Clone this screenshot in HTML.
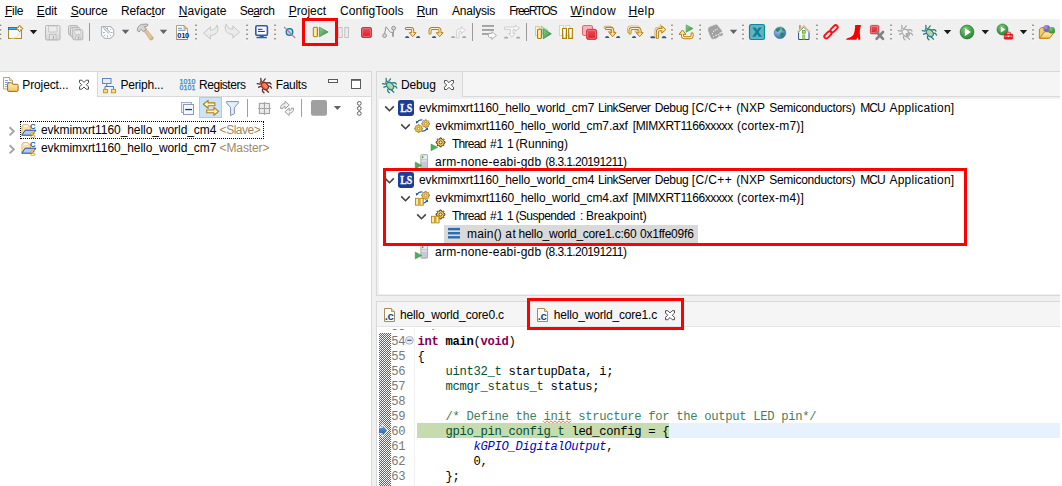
<!DOCTYPE html>
<html lang="en"><head><meta charset="utf-8"><title>MCUXpresso IDE</title>
<style>
html,body{margin:0;padding:0}
body{width:1062px;height:486px;overflow:hidden;background:#fff;position:relative;font:12px/16px "Liberation Sans",sans-serif;color:#000}
.a{position:absolute}
.t{position:absolute;white-space:pre;font:12px/16px "Liberation Sans",sans-serif}
.t u{text-decoration:underline;text-underline-offset:1px}
.c{position:absolute;white-space:pre;font:12.2px/15px "Liberation Mono",monospace;letter-spacing:-0.32px;left:417.5px}
.ln{position:absolute;white-space:pre;font:12.2px/15px "Liberation Mono",monospace;letter-spacing:-0.32px;left:391.3px;color:#787878}
.k{color:#7f0055;font-weight:bold}
.b{font-weight:bold}
.ty{color:#005032}
.cm{color:#3f7f5f}
.en{color:#0000c0;font-style:italic}
svg{position:absolute;overflow:visible}
.rb{border:3px solid #f00}
#ruler{background-image:conic-gradient(#1f70d8 25%,#fff 0 50%,#1f70d8 0 75%,#fff 0);background-size:2px 2px}
.sq{text-decoration:underline wavy #e66;text-decoration-thickness:1px;text-underline-offset:2px}
</style></head>
<body>
<div class="a" style="left:0;top:0;width:1060px;height:486px;background:#f0f0f0"></div>
<div class="a" style="left:0;top:0;width:1062px;height:19px;background:#fff"></div>

<!-- left view stack -->
<div class="a" style="left:0;top:71px;width:372px;height:1px;background:#d9d9d9"></div>
<div class="a" style="left:0;top:72px;width:371px;height:414px;background:#fff"></div>
<div class="a" style="left:98px;top:72px;width:273px;height:24px;background:#f3f3f3"></div>
<div class="a" style="left:97px;top:72px;width:1px;height:25px;background:#d9d9d9"></div>
<div class="a" style="left:97px;top:96px;width:274px;height:1px;background:#d9d9d9"></div>
<div class="a" style="left:371px;top:71px;width:1px;height:415px;background:#d9d9d9"></div>
<!-- link-with-editor toggled button -->
<div class="a" style="left:199px;top:97px;width:21px;height:19px;background:#cce4f7;border:1px solid #99d1ff"></div>
<!-- left toolbar separators -->
<div class="a" style="left:247px;top:99px;width:1px;height:18px;background:#a0a0a0"></div>
<div class="a" style="left:301px;top:99px;width:1px;height:18px;background:#a0a0a0"></div>
<!-- focus rectangle -->
<div class="a" style="left:20px;top:121px;width:242px;height:16px;border:1px dotted #000"></div>

<!-- debug view -->
<div class="a" style="left:376px;top:71px;width:684px;height:225px;background:#f0f0f0;border:1px solid #d9d9d9;border-right:0;box-sizing:border-box"></div>
<div class="a" style="left:463px;top:72px;width:597px;height:24px;background:#f5f5f5"></div>
<div class="a" style="left:462px;top:72px;width:1px;height:25px;background:#d9d9d9"></div>
<div class="a" style="left:462px;top:96px;width:598px;height:1px;background:#d9d9d9"></div>
<div class="a" style="left:379px;top:99px;width:681px;height:195px;background:#fff"></div>
<!-- selected stack frame -->
<div class="a" style="left:444px;top:225px;width:254px;height:18px;background:#d9d9d9"></div>

<!-- editor area -->
<div class="a" style="left:376px;top:301px;width:684px;height:185px;background:#f0f0f0;border:1px solid #d9d9d9;border-right:0;border-bottom:0;box-sizing:border-box"></div>
<div class="a" style="left:377px;top:302px;width:683px;height:24px;background:#f5f5f5"></div>
<div class="a" style="left:377px;top:326px;width:683px;height:1px;background:#e4e4e4"></div>
<div class="a" style="left:377px;top:327px;width:683px;height:159px;background:#fff"></div>
<div class="a" id="ruler" style="left:379px;top:333px;width:12px;height:153px"></div>
<div class="a" style="left:414px;top:328px;width:1px;height:158px;background:#f0f0f0"></div>
<!-- current line + instruction pointer highlight -->
<div class="a" style="left:417px;top:423px;width:643px;height:15px;background:#e8f2fe"></div>
<div class="a" style="left:417px;top:423px;width:252px;height:15px;background:#c6dbae"></div>

<svg width="1062" height="486" viewBox="0 0 1062 486" style="left:0;top:0">
<defs>
<linearGradient id="gY" x1="0" y1="0" x2="0" y2="1"><stop offset="0" stop-color="#fff6d0"/><stop offset="1" stop-color="#efc23e"/></linearGradient>
<linearGradient id="gYh" x1="0" y1="0" x2="1" y2="0"><stop offset="0" stop-color="#f3cf5c"/><stop offset=".5" stop-color="#fff3c4"/><stop offset="1" stop-color="#e9b93a"/></linearGradient>
<linearGradient id="gG" x1="0" y1="0" x2="1" y2="1"><stop offset="0" stop-color="#8fd08a"/><stop offset="1" stop-color="#2f8f3c"/></linearGradient>
<linearGradient id="gR" x1="0" y1="0" x2="0" y2="1"><stop offset="0" stop-color="#ee5058"/><stop offset="1" stop-color="#e01828"/></linearGradient>
<linearGradient id="gGr" x1="0" y1="0" x2="0" y2="1"><stop offset="0" stop-color="#f4f4f4"/><stop offset="1" stop-color="#d4d4d4"/></linearGradient>
<radialGradient id="gPlay" cx=".4" cy=".3" r=".8"><stop offset="0" stop-color="#7cc86c"/><stop offset="1" stop-color="#1e7e34"/></radialGradient>
<radialGradient id="gGlobe" cx=".35" cy=".3" r=".8"><stop offset="0" stop-color="#9cc8ee"/><stop offset="1" stop-color="#2c68ac"/></radialGradient>
<radialGradient id="gPur" cx=".35" cy=".3" r=".8"><stop offset="0" stop-color="#a99be0"/><stop offset="1" stop-color="#5a48a8"/></radialGradient>
<linearGradient id="gFold" x1="0" y1="0" x2="0" y2="1"><stop offset="0" stop-color="#fdeeb0"/><stop offset="1" stop-color="#f2c85c"/></linearGradient>
<linearGradient id="gWin" x1="0" y1="0" x2="1" y2="1"><stop offset="0" stop-color="#dff0fd"/><stop offset="1" stop-color="#ffffff"/></linearGradient>
<linearGradient id="gIP" x1="0" y1="0" x2="0" y2="1"><stop offset="0" stop-color="#6ca0d4"/><stop offset="1" stop-color="#245ca4"/></linearGradient>
</defs>
<rect x="-0.4" y="24.6" width="1.6" height="1.6" fill="#8c8372"/><rect x="-0.4" y="26.2" width="1.6" height="1" fill="#fbfbfb"/>
<rect x="-0.4" y="29.2" width="1.6" height="1.6" fill="#8c8372"/><rect x="-0.4" y="30.8" width="1.6" height="1" fill="#fbfbfb"/>
<rect x="-0.4" y="33.6" width="1.6" height="1.6" fill="#8c8372"/><rect x="-0.4" y="35.2" width="1.6" height="1" fill="#fbfbfb"/>
<rect x="-0.4" y="38.0" width="1.6" height="1.6" fill="#8c8372"/><rect x="-0.4" y="39.6" width="1.6" height="1" fill="#fbfbfb"/>
<g><rect x="8.500" y="27.500" width="13" height="11" fill="#f2f9fe" stroke="#94742c"/><path d="M8.500 30v8.500h13v-8.500" fill="none" stroke="#a88830" stroke-width="1"/><rect x="8" y="27" width="9" height="3" fill="#2c6cb4"/><rect x="9" y="27.900" width="8" height="1.300" fill="#4cacE4"/><path d="M11.500 38.200c5 0 8-2.500 8.800-7" fill="none" stroke="#f8e8b0" stroke-width="1.200"/><path d="M19.600 25.200l3.200 3.300-3.200 3.300-3.200-3.300z" fill="#a8841c" stroke="#a8841c" stroke-width="1" stroke-linejoin="round"/><path d="M19.600 26.300v4.400M17.400 28.500h4.400" stroke="#fffbe8" stroke-width="1.300"/></g>
<path d="M29.8 30.0h7.4l-3.7 4.2z" fill="#1a1a1a"/>
<g opacity="1"><rect x="45.5" y="25.5" width="14.5" height="14.5" rx="1.6" fill="url(#gGr)" stroke="#b4b4b4"/><rect x="48.4" y="25.9" width="8.7" height="6.1" rx="0.8" fill="#ececec" stroke="#bcbcbc" stroke-width=".8"/><rect x="49.6" y="34.5" width="6.4" height="5.1" fill="#e6e6e6" stroke="#b8b8b8" stroke-width=".8"/><rect x="52.8" y="35.9" width="1.2" height="2.9" fill="#a8a8a8"/></g>
<g opacity="1"><rect x="68.5" y="25.5" width="9.5" height="9.5" rx="1.6" fill="url(#gGr)" stroke="#b4b4b4"/><rect x="70.4" y="25.9" width="5.7" height="4.0" rx="0.8" fill="#ececec" stroke="#bcbcbc" stroke-width=".8"/><rect x="71.2" y="31.4" width="4.2" height="3.2" fill="#e6e6e6" stroke="#b8b8b8" stroke-width=".8"/><rect x="73.2" y="32.3" width="1.2" height="1.9" fill="#a8a8a8"/></g>
<g opacity="1"><rect x="70.5" y="27.5" width="9.5" height="9.5" rx="1.6" fill="url(#gGr)" stroke="#b4b4b4"/><rect x="72.4" y="27.9" width="5.7" height="4.0" rx="0.8" fill="#ececec" stroke="#bcbcbc" stroke-width=".8"/><rect x="73.2" y="33.4" width="4.2" height="3.2" fill="#e6e6e6" stroke="#b8b8b8" stroke-width=".8"/><rect x="75.2" y="34.3" width="1.2" height="1.9" fill="#a8a8a8"/></g>
<g opacity="1"><rect x="72.8" y="29.8" width="10.0" height="10.0" rx="1.6" fill="url(#gGr)" stroke="#b4b4b4"/><rect x="74.8" y="30.2" width="6.0" height="4.2" rx="0.8" fill="#ececec" stroke="#bcbcbc" stroke-width=".8"/><rect x="75.6" y="36.0" width="4.4" height="3.4" fill="#e6e6e6" stroke="#b8b8b8" stroke-width=".8"/><rect x="77.8" y="37.0" width="1.2" height="2.0" fill="#a8a8a8"/></g>
<rect x="89.0" y="23" width="1" height="18" fill="#9a9a9a"/>
<g><path d="M101.5 26.5h9l3.2 3.2v5.6l-3.4 3.2h-5.4l-3.4-3.2z" fill="#fbfcfd" stroke="#a9b9c4" stroke-width="1.1"/><path d="M107.5 27.5v2M107.5 35.5v2M102.8 32.5h2M110.5 32.5h2M104.2 29.2l1 1M110.8 29.2l-1 1M104.2 35.8l1-1M110.8 35.8l-1-1" stroke="#a4a8ac" stroke-width=".9"/><path d="M103.2 27.6l5.2 5.6 1.3-1.2-5-5.4z" fill="#f0f0f0" stroke="#9aa0a6" stroke-width=".8"/></g>
<path d="M121.8 29.8h7.4l-3.7 4.2z" fill="#62626a"/>
<g><path d="M143.3 30.2l2.4-1.8 7.2 8.6 0.4 1.6-0.9 1.2-2.3 0.2z" fill="#dcc09c" stroke="#c8a880" stroke-width=".6"/><path d="M137.3 30.6c-.4-2.6 1.6-5.4 4.2-6.2l5.8-.4.8 1-1.2 1.4-2.6.2 2 2.6-3 2.6-1.8-2.2c-1.2.2-2 .9-2.2 2.4z" fill="#d4d4d4" stroke="#8c8c8c" stroke-width=".8"/><path d="M150.5 39.6l2.6-2" stroke="#c49c78" stroke-width="1"/></g>
<path d="M159.8 29.8h7.4l-3.7 4.2z" fill="#62626a"/>
<g><path d="M176.5 25.5h7.5l3.5 3.5v10.5h-11z" fill="#fdfdfd" stroke="#b4a070" stroke-width="1"/><path d="M184 25.5v3.5h3.5z" fill="#e9c878" stroke="#b4a070" stroke-width=".8"/><path d="M176.5 39.5h11" stroke="#6c84b4" stroke-width="1"/><rect x="178" y="27.8" width="4" height="1" fill="#6c8cc8"/><rect x="178" y="29.8" width="7.5" height="1" fill="#6c8cc8"/><text x="177.3" y="38.4" font-family="Liberation Sans, sans-serif" font-weight="bold" font-size="7.6" fill="#14285c" letter-spacing="-0.35">010</text></g>
<rect x="195.2" y="24.6" width="1.6" height="1.6" fill="#8c8372"/><rect x="195.2" y="26.2" width="1.6" height="1" fill="#fbfbfb"/>
<rect x="195.2" y="29.2" width="1.6" height="1.6" fill="#8c8372"/><rect x="195.2" y="30.8" width="1.6" height="1" fill="#fbfbfb"/>
<rect x="195.2" y="33.6" width="1.6" height="1.6" fill="#8c8372"/><rect x="195.2" y="35.2" width="1.6" height="1" fill="#fbfbfb"/>
<rect x="195.2" y="38.0" width="1.6" height="1.6" fill="#8c8372"/><rect x="195.2" y="39.6" width="1.6" height="1" fill="#fbfbfb"/>
<path d="M203.6 33.2l6.8-6.4v3.4c3.6-.2 5.6-1.8 6.4-5 .9 1 1.2 2.4 1.2 3.8 0 3.6-2.8 6.2-7.6 6.4v3.6z" fill="#ebebeb" stroke="#c2c2c2" stroke-width=".9" stroke-linejoin="round"/>
<path d="M239.6 32.2l-6.8-6.4v3.4c-3.6-.2-5.6-1.8-6.4-5-.9 1-1.2 2.4-1.2 3.8 0 3.6 2.8 6.2 7.6 6.4v3.6z" fill="#ebebeb" stroke="#c2c2c2" stroke-width=".9" stroke-linejoin="round"/>
<rect x="246.2" y="24.6" width="1.6" height="1.6" fill="#8c8372"/><rect x="246.2" y="26.2" width="1.6" height="1" fill="#fbfbfb"/>
<rect x="246.2" y="29.2" width="1.6" height="1.6" fill="#8c8372"/><rect x="246.2" y="30.8" width="1.6" height="1" fill="#fbfbfb"/>
<rect x="246.2" y="33.6" width="1.6" height="1.6" fill="#8c8372"/><rect x="246.2" y="35.2" width="1.6" height="1" fill="#fbfbfb"/>
<rect x="246.2" y="38.0" width="1.6" height="1.6" fill="#8c8372"/><rect x="246.2" y="39.6" width="1.6" height="1" fill="#fbfbfb"/>
<g><rect x="255.8" y="25.8" width="11.6" height="9.6" rx="1.4" fill="#fdfdff" stroke="#2c5cac" stroke-width="1.6"/><rect x="258" y="28.8" width="4.4" height="1" fill="#1c2c7c"/><rect x="258" y="30.9" width="6.8" height="1" fill="#1c2c7c"/><path d="M260 35.6h3.4l.6 1.6h-4.6z" fill="#2c5cac"/><rect x="256.4" y="37" width="10.6" height="1.2" rx=".5" fill="#2c5cac"/></g>
<rect x="274.2" y="24.6" width="1.6" height="1.6" fill="#8c8372"/><rect x="274.2" y="26.2" width="1.6" height="1" fill="#fbfbfb"/>
<rect x="274.2" y="29.2" width="1.6" height="1.6" fill="#8c8372"/><rect x="274.2" y="30.8" width="1.6" height="1" fill="#fbfbfb"/>
<rect x="274.2" y="33.6" width="1.6" height="1.6" fill="#8c8372"/><rect x="274.2" y="35.2" width="1.6" height="1" fill="#fbfbfb"/>
<rect x="274.2" y="38.0" width="1.6" height="1.6" fill="#8c8372"/><rect x="274.2" y="39.6" width="1.6" height="1" fill="#fbfbfb"/>
<g><circle cx="289.5" cy="32" r="3.3" fill="#b4d4ec" stroke="#1c6ca4" stroke-width="1.3"/><path d="M284 26.8l11.2 11.2" stroke="#8c8c94" stroke-width="1.1"/></g>
<g><rect x="313.3" y="27.3" width="4.2" height="9.4" rx=".6" fill="url(#gYh)" stroke="#b08414" stroke-width="1"/><path d="M319.4 27.2l8.8 4.8-8.8 4.8z" fill="url(#gG)" stroke="#3c9448" stroke-width=".7" stroke-linejoin="round"/></g>
<g fill="#ececec" stroke="#bdbdbd" stroke-width=".9"><rect x="338.6" y="27.5" width="3.6" height="10"/><rect x="344.8" y="27.5" width="3.6" height="10"/></g>
<g><rect x="361.5" y="27.5" width="10" height="10" rx="1.6" fill="url(#gR)" stroke="#c8343c" stroke-width="1"/><rect x="362.6" y="28.6" width="7.8" height="7.8" rx=".8" fill="none" stroke="#f48088" stroke-width=".7"/></g>
<g fill="none" stroke="#8a8a8a" stroke-width=".9"><path d="M384.6 33.6l1.4-6.8 4.6 5.6 1.8-.2.6 4.6.6-6.6"/><circle cx="384.6" cy="35.6" r="1.9" fill="#d8d8d8"/><circle cx="393.6" cy="28.2" r="1.9" fill="#d8d8d8"/></g>
<path d="M405.0 38.0c.2-2.700 4.100-2.700 4.300 0z" fill="#2c5890"/>
<path d="M416.0 38.0c.2-2.700 4.100-2.700 4.300 0z" fill="#2c5890"/>
<path d="M406.3 28.5h4.700q1.700 0 1.700 1.700v3.200" fill="none" stroke="#b47e10" stroke-width="3" stroke-linecap="round" stroke-linejoin="round"/>
<path d="M409.3 32.7h6.800l-3.400 3.900z" fill="#fde6a0" stroke="#b47e10" stroke-width="1" stroke-linejoin="round"/>
<path d="M406.3 28.5h4.700q1.700 0 1.700 1.700v3.200" fill="none" stroke="#fff4cc" stroke-width="1.100" stroke-linecap="round" stroke-linejoin="round"/>
<path d="M431.9 38.0c.2-2.700 4.100-2.700 4.300 0z" fill="#2c5890"/>
<path d="M430.0 33.1v-2.300q0-2.300 2.300-2.300h5.400q2.300 0 2.300 2.300v1.800" fill="none" stroke="#b47e10" stroke-width="3" stroke-linecap="round" stroke-linejoin="round"/>
<path d="M436.3 32.7h6.800l-3.400 3.900z" fill="#fde6a0" stroke="#b47e10" stroke-width="1" stroke-linejoin="round"/>
<path d="M430.0 33.1v-2.300q0-2.300 2.300-2.300h5.400q2.300 0 2.300 2.300v1.800" fill="none" stroke="#fff4cc" stroke-width="1.100" stroke-linecap="round" stroke-linejoin="round"/>
<path d="M451.0 38.0c.2-2.700 4.100-2.700 4.300 0z" fill="#a8a8a8"/>
<path d="M462.0 38.0c.2-2.700 4.100-2.700 4.300 0z" fill="#a8a8a8"/>
<g><path d="M456.6 38v-6.4c0-1.6 1-2.6 2.6-2.6h2v-2.2l4 3.4-4 3.4v-2.2h-1.4c-.6 0-.9.3-.9.9v5.7z" fill="#fafafa" stroke="#c8c8c8" stroke-width=".8" stroke-linejoin="round"/></g>
<rect x="472.0" y="23" width="1" height="18" fill="#9a9a9a"/>
<g><rect x="482" y="25.2" width="12" height="1.5" fill="#8e8e8e"/><rect x="482" y="29.2" width="12" height="1.5" fill="#8e8e8e"/><rect x="482" y="33.2" width="9" height="1.5" fill="#8e8e8e"/><path d="M488.4 33.4h3.4v-1.8l4.6 3.9-4.6 3.9v-1.8h-1.6c-1.2 0-1.8-.6-1.8-1.8z" fill="#fbfbfb" stroke="#9c9c9c" stroke-width=".8" stroke-linejoin="round"/></g>
<path d="M504.0 38.6c.2-2.700 4.100-2.700 4.300 0z" fill="#a8a8a8"/>
<path d="M516.0 38.6c.2-2.700 4.100-2.700 4.300 0z" fill="#a8a8a8"/>
<g><path d="M504.6 27h10.6v-1.8l4.2 3-4.2 3v-1.8h-2v4h1.8l-3.2 3.8-3.2-3.8h1.8v-4h-5.8z" fill="#f8f8f8" stroke="#c4c4c4" stroke-width=".8" stroke-linejoin="round"/></g>
<rect x="526.0" y="23" width="1" height="18" fill="#9a9a9a"/>
<g><rect x="535.4" y="26.4" width="3.8" height="9" fill="#fdf4d4" stroke="#dcc07c" stroke-width=".8"/><path d="M541.2 26l7 4.4-7 4.6z" fill="#b4dcb4" stroke="#8cc494" stroke-width=".6"/><rect x="537.5" y="29.3" width="4" height="9.2" rx=".5" fill="url(#gYh)" stroke="#a87c10" stroke-width="1"/><path d="M543.3 29l8 4.8-8 4.9z" fill="url(#gG)" stroke="#2c8840" stroke-width=".7" stroke-linejoin="round"/></g>
<g><rect x="559.4" y="25.4" width="4" height="10.2" fill="#fffbe8" stroke="#e4cc8c" stroke-width=".8"/><rect x="565.8" y="25.4" width="4" height="10.2" fill="#fffbe8" stroke="#e4cc8c" stroke-width=".8"/><rect x="562.5" y="28.5" width="4" height="10" fill="url(#gY)" stroke="#ac8010" stroke-width="1"/><rect x="568.6" y="28.5" width="4" height="10" fill="url(#gY)" stroke="#ac8010" stroke-width="1"/><rect x="564" y="29.5" width="1" height="8" fill="#fffdf0"/><rect x="570.1" y="29.5" width="1" height="8" fill="#fffdf0"/></g>
<g><rect x="582.5" y="25.5" width="10" height="10" rx="1.4" fill="#f8b4b8" stroke="#e46870" stroke-width="1"/><rect x="586.6" y="29.4" width="10" height="10" rx="1.6" fill="url(#gR)" stroke="#d03844" stroke-width="1"/><rect x="587.7" y="30.5" width="7.8" height="7.8" rx=".8" fill="none" stroke="#f48890" stroke-width=".7"/></g>
<g opacity=".55" transform="translate(-1.2,-1.2)">
<path d="M606.3 28.5h4.700q1.700 0 1.700 1.700v3.200" fill="none" stroke="#b47e10" stroke-width="3" stroke-linecap="round" stroke-linejoin="round"/>
<path d="M609.3 32.7h6.800l-3.400 3.900z" fill="#fde6a0" stroke="#b47e10" stroke-width="1" stroke-linejoin="round"/>
<path d="M606.3 28.5h4.700q1.700 0 1.700 1.700v3.200" fill="none" stroke="#fff4cc" stroke-width="1.100" stroke-linecap="round" stroke-linejoin="round"/>
</g>
<path d="M605.0 38.0c.2-2.700 4.100-2.700 4.300 0z" fill="#2c5890"/>
<path d="M616.0 38.0c.2-2.700 4.100-2.700 4.300 0z" fill="#2c5890"/>
<path d="M606.3 28.5h4.700q1.700 0 1.700 1.700v3.200" fill="none" stroke="#b47e10" stroke-width="3" stroke-linecap="round" stroke-linejoin="round"/>
<path d="M609.3 32.7h6.800l-3.400 3.900z" fill="#fde6a0" stroke="#b47e10" stroke-width="1" stroke-linejoin="round"/>
<path d="M606.3 28.5h4.700q1.700 0 1.700 1.700v3.200" fill="none" stroke="#fff4cc" stroke-width="1.100" stroke-linecap="round" stroke-linejoin="round"/>
<g opacity=".55" transform="translate(-1.4,-1.6)">
<path d="M630.0 33.1v-2.300q0-2.300 2.300-2.300h5.400q2.300 0 2.300 2.300v1.800" fill="none" stroke="#b47e10" stroke-width="3" stroke-linecap="round" stroke-linejoin="round"/>
<path d="M636.3 32.7h6.800l-3.400 3.900z" fill="#fde6a0" stroke="#b47e10" stroke-width="1" stroke-linejoin="round"/>
<path d="M630.0 33.1v-2.300q0-2.300 2.300-2.300h5.400q2.300 0 2.300 2.300v1.800" fill="none" stroke="#fff4cc" stroke-width="1.100" stroke-linecap="round" stroke-linejoin="round"/>
</g>
<path d="M631.9 38.0c.2-2.700 4.100-2.700 4.300 0z" fill="#2c5890"/>
<path d="M630.0 33.1v-2.300q0-2.300 2.300-2.300h5.400q2.300 0 2.300 2.300v1.800" fill="none" stroke="#b47e10" stroke-width="3" stroke-linecap="round" stroke-linejoin="round"/>
<path d="M636.3 32.7h6.800l-3.400 3.900z" fill="#fde6a0" stroke="#b47e10" stroke-width="1" stroke-linejoin="round"/>
<path d="M630.0 33.1v-2.300q0-2.300 2.300-2.300h5.400q2.300 0 2.300 2.300v1.800" fill="none" stroke="#fff4cc" stroke-width="1.100" stroke-linecap="round" stroke-linejoin="round"/>
<path d="M650.0 38.0c.2-2.700 4.100-2.700 4.300 0z" fill="#5c7ca8"/>
<path d="M661.5 38.0c.2-2.700 4.100-2.700 4.300 0z" fill="#5c7ca8"/>
<g opacity=".5" transform="translate(-1.500,-1.300)">
<path d="M657.4 37.6v-5.600q0-2.400 2.400-2.400h2.400" fill="none" stroke="#b47e10" stroke-width="3" stroke-linecap="round" stroke-linejoin="round"/>
<path d="M661.8 26.0l4 3.600-4 3.600z" fill="#fde6a0" stroke="#b47e10" stroke-width="1" stroke-linejoin="round"/>
<path d="M657.4 37.6v-5.600q0-2.400 2.400-2.400h2.400" fill="none" stroke="#fff4cc" stroke-width="1.100" stroke-linecap="round" stroke-linejoin="round"/>
</g>
<path d="M657.4 37.6v-5.600q0-2.400 2.400-2.400h2.400" fill="none" stroke="#b47e10" stroke-width="3" stroke-linecap="round" stroke-linejoin="round"/>
<path d="M661.8 26.0l4 3.600-4 3.600z" fill="#fde6a0" stroke="#b47e10" stroke-width="1" stroke-linejoin="round"/>
<path d="M657.4 37.6v-5.600q0-2.400 2.400-2.400h2.400" fill="none" stroke="#fff4cc" stroke-width="1.100" stroke-linecap="round" stroke-linejoin="round"/>
<path d="M651.0 38.2c.2-2.700 4.100-2.700 4.300 0z" fill="#2c5890"/>
<path d="M662.2 38.2c.2-2.700 4.100-2.700 4.300 0z" fill="#2c5890"/>
<rect x="671.2" y="24.6" width="1.6" height="1.6" fill="#8c8372"/><rect x="671.2" y="26.2" width="1.6" height="1" fill="#fbfbfb"/>
<rect x="671.2" y="29.2" width="1.6" height="1.6" fill="#8c8372"/><rect x="671.2" y="30.8" width="1.6" height="1" fill="#fbfbfb"/>
<rect x="671.2" y="33.6" width="1.6" height="1.6" fill="#8c8372"/><rect x="671.2" y="35.2" width="1.6" height="1" fill="#fbfbfb"/>
<rect x="671.2" y="38.0" width="1.6" height="1.6" fill="#8c8372"/><rect x="671.2" y="39.6" width="1.6" height="1" fill="#fbfbfb"/>
<path d="M686.200 24.900l6.800 3.500-6.800 3.800z" fill="url(#gG)" stroke="#3c9c48" stroke-width=".6" stroke-linejoin="round"/>
<path d="M682.500 34v1.500q0 2.300 2.300 2.300h5q2.300 0 2.300-2.300v-1.800" fill="none" stroke="#b47e10" stroke-width="3" stroke-linecap="round" stroke-linejoin="round"/>
<path d="M679 34.300h7l-3.500-4.300z" fill="#fde6a0" stroke="#b47e10" stroke-width="1" stroke-linejoin="round"/>
<path d="M682.500 34v1.500q0 2.300 2.300 2.300h5q2.300 0 2.300-2.300v-1.800" fill="none" stroke="#fff4cc" stroke-width="1.100" stroke-linecap="round" stroke-linejoin="round"/>
<rect x="699.4" y="24.6" width="1.6" height="1.6" fill="#8c8372"/><rect x="699.4" y="26.2" width="1.6" height="1" fill="#fbfbfb"/>
<rect x="699.4" y="29.2" width="1.6" height="1.6" fill="#8c8372"/><rect x="699.4" y="30.8" width="1.6" height="1" fill="#fbfbfb"/>
<rect x="699.4" y="33.6" width="1.6" height="1.6" fill="#8c8372"/><rect x="699.4" y="35.2" width="1.6" height="1" fill="#fbfbfb"/>
<rect x="699.4" y="38.0" width="1.6" height="1.6" fill="#8c8372"/><rect x="699.4" y="39.6" width="1.6" height="1" fill="#fbfbfb"/>
<g><path d="M708.100 29.600l1.100-2.400 6.600-2.400 1.200.2 5 6.200-2.600 1.600 3.400.6-.6 2.200-3.200.2-.4.800-3.100 2-3.600.2-2-3.800z" fill="#a2a2a2" stroke="#a2a2a2" stroke-width=".6" stroke-linejoin="round"/><path d="M713 31.800c1.400-1.400 3-2.200 4.800-2.600" fill="none" stroke="#f4f4f4" stroke-width="1" stroke-dasharray="1.600 .7"/><path d="M712 33.600l1 .1M713 36.600l.9-.3M715.400 35.600l1.600-.6M718 34l1 1.600M719.400 33.400l2-.4" fill="none" stroke="#f4f4f4" stroke-width="1"/></g>
<path d="M729.8 29.8h7.4l-3.7 4.2z" fill="#62626a"/>
<rect x="742.2" y="24.6" width="1.6" height="1.6" fill="#8c8372"/><rect x="742.2" y="26.2" width="1.6" height="1" fill="#fbfbfb"/>
<rect x="742.2" y="29.2" width="1.6" height="1.6" fill="#8c8372"/><rect x="742.2" y="30.8" width="1.6" height="1" fill="#fbfbfb"/>
<rect x="742.2" y="33.6" width="1.6" height="1.6" fill="#8c8372"/><rect x="742.2" y="35.2" width="1.6" height="1" fill="#fbfbfb"/>
<rect x="742.2" y="38.0" width="1.6" height="1.6" fill="#8c8372"/><rect x="742.2" y="39.6" width="1.6" height="1" fill="#fbfbfb"/>
<g><rect x="749.5" y="24.5" width="15" height="15" rx="1.8" fill="#62b2c2" stroke="#0c8a9e" stroke-width="1.2"/><path d="M752.4 27.4h3l1.7 2.7 1.7-2.700h3l-3.200 4.600 3.400 4.800h-3.100l-1.800-2.900-1.800 2.900h-3.100l3.400-4.800z" fill="#0a8296"/></g>
<g><circle cx="780" cy="32.8" r="5.8" fill="url(#gGlobe)" stroke="#3c70ac" stroke-width=".6"/><path d="M775.600 30c1.200-1.800 3.400-2.400 5-1.600-.2 1.400-1.600 1.800-2 3.200-1.200 1-2.400-.2-3-1.600zM780.400 33.200c1.400-1.200 3.200-.6 4 .8-.4 1.800-1.600 3.200-3 3.800-1-1.400-1.800-3-1-4.600zM782 28c1.400.2 2.600 1.200 3.200 2.600-1.200.4-2.400-.2-3-1.200z" fill="#2c8a54"/></g>
<g><rect x="799" y="25" width="1.800" height="4.500" fill="#c49c64"/><path d="M798.600 32v7.500h10.400v-7.500l-5.200-4.800z" fill="#f8fbff" stroke="#2c4c94" stroke-width="1"/><path d="M797.600 32.400l6.200-6.400 6.200 6.400" fill="none" stroke="#dcc48c" stroke-width="1.700" stroke-linejoin="miter"/><rect x="802.400" y="30.600" width="2.800" height="2.600" fill="#d8e04c" stroke="#4c9c3c" stroke-width=".8"/><rect x="802.800" y="35" width="2" height="4.200" fill="#d8e04c" stroke="#5ca83c" stroke-width=".7"/></g>
<rect x="816.2" y="24.6" width="1.6" height="1.6" fill="#8c8372"/><rect x="816.2" y="26.2" width="1.6" height="1" fill="#fbfbfb"/>
<rect x="816.2" y="29.2" width="1.6" height="1.6" fill="#8c8372"/><rect x="816.2" y="30.8" width="1.6" height="1" fill="#fbfbfb"/>
<rect x="816.2" y="33.6" width="1.6" height="1.6" fill="#8c8372"/><rect x="816.2" y="35.2" width="1.6" height="1" fill="#fbfbfb"/>
<rect x="816.2" y="38.0" width="1.6" height="1.6" fill="#8c8372"/><rect x="816.2" y="39.6" width="1.6" height="1" fill="#fbfbfb"/>
<g fill="none" stroke="#f4141c" stroke-width="1.900"><rect x="-2" y="-4.200" width="4" height="8.400" rx="2" transform="translate(827.900,34.900) rotate(45)"/><rect x="-2" y="-4.200" width="4" height="8.400" rx="2" transform="translate(834.100,28.700) rotate(45)"/></g>
<path d="M855.200 25h5.800c-.6 3-1.400 5.600-1.200 8.400.2 2.200.6 4.400.4 6.400h-1.800l-.4-2.600c-.8.400-1.400 1.400-1.600 2.600h-10.400c.2-1 1-1.400 2-1.800 2.400-.8 4.400-1.800 5.600-3.600 1.200-2.800 1.400-6 1.600-9.400z" fill="#f80000"/>
<g><rect x="870.400" y="25.400" width="8.400" height="8.400" rx="1.200" fill="url(#gR)" stroke="#d44850" stroke-width="1"/><rect x="871.500" y="26.500" width="6.200" height="6.200" fill="none" stroke="#f49098" stroke-width=".6"/><path d="M876.600 32l6.400 6.800M883 32l-6.400 6.800" stroke="#828282" stroke-width="2.600" stroke-linecap="round"/></g>
<rect x="890.2" y="24.6" width="1.6" height="1.6" fill="#8c8372"/><rect x="890.2" y="26.2" width="1.6" height="1" fill="#fbfbfb"/>
<rect x="890.2" y="29.2" width="1.6" height="1.6" fill="#8c8372"/><rect x="890.2" y="30.8" width="1.6" height="1" fill="#fbfbfb"/>
<rect x="890.2" y="33.6" width="1.6" height="1.6" fill="#8c8372"/><rect x="890.2" y="35.2" width="1.6" height="1" fill="#fbfbfb"/>
<rect x="890.2" y="38.0" width="1.6" height="1.6" fill="#8c8372"/><rect x="890.2" y="39.6" width="1.6" height="1" fill="#fbfbfb"/>
<g transform="translate(898.0,25.0) scale(1.000)"><g fill="none" stroke="#a8a8a8" stroke-width="1.250" stroke-linecap="round"><path d="M4.200 4.200l-.4-3.800M6.600 3l1.600-2.200M3 6.200l-2.800-.600M9.600 4.800l3-.2 1.400 1.400M3.800 8.400l-2.600 1 .2 0M10.800 8l2.600.4 1.200 1.600M5.400 11.400l.2 2 1.400 1.400M9 11.600l1.400 1.600 1.200 1"/></g><circle cx="4.700" cy="4.700" r="1.500" fill="#f4f4f4" stroke="#a8a8a8" stroke-width=".9"/><ellipse cx="7.800" cy="8" rx="3" ry="4.100" transform="rotate(-40 7.800 8)" fill="#f4f4f4" stroke="#a8a8a8" stroke-width="1.100"/><path d="M7.500 8.500l3.500-1.500-.5 3.500-2.500 1.500z" fill="#a8a8a8"/></g>
<g transform="translate(922.0,25.0) scale(1.000)"><g fill="none" stroke="#2a7c6c" stroke-width="1.250" stroke-linecap="round"><path d="M4.200 4.200l-.4-3.800M6.600 3l1.600-2.200M3 6.200l-2.800-.600M9.600 4.800l3-.2 1.400 1.400M3.800 8.400l-2.600 1 .2 0M10.800 8l2.600.4 1.200 1.600M5.400 11.400l.2 2 1.400 1.400M9 11.600l1.400 1.600 1.200 1"/></g><circle cx="4.700" cy="4.700" r="1.500" fill="#a4cc98" stroke="#1c7a9c" stroke-width=".9"/><ellipse cx="7.800" cy="8" rx="3" ry="4.100" transform="rotate(-40 7.800 8)" fill="#a4cc98" stroke="#1c7a9c" stroke-width="1.100"/><path d="M6.200 6.600l3.400 3.400M7.600 5.800l2.800 2.800" stroke="#ddf0d0" stroke-width=".7"/></g>
<path d="M943.8 30.0h7.4l-3.7 4.2z" fill="#1a1a1a"/>
<g><circle cx="967" cy="32" r="6.900" fill="url(#gPlay)" stroke="#1c7430" stroke-width=".7"/><path d="M964.800 27.800l6 4.200-6 4.200z" fill="#fff"/></g>
<path d="M981.6 30.0h7.4l-3.7 4.2z" fill="#1a1a1a"/>
<g><circle cx="1002.500" cy="29.500" r="5.500" fill="url(#gPlay)" stroke="#1c7430" stroke-width=".6"/><path d="M1000.800 26.400l4.600 3.100-4.600 3.100z" fill="#fff"/><rect x="1006.600" y="32.200" width="3.800" height="2.400" rx=".8" fill="none" stroke="#e41c24" stroke-width="1"/><rect x="1004.200" y="34" width="8.600" height="5.200" rx=".9" fill="#e81c24" stroke="#cc1018" stroke-width=".6"/><rect x="1004.600" y="35.800" width="7.800" height=".8" fill="#f8a0a4"/><rect x="1007.600" y="35.300" width="1.800" height="1.800" fill="#f8c8c8"/></g>
<path d="M1019.8 30.0h7.4l-3.7 4.2z" fill="#1a1a1a"/>
<rect x="1032.2" y="24.6" width="1.6" height="1.6" fill="#8c8372"/><rect x="1032.2" y="26.2" width="1.6" height="1" fill="#fbfbfb"/>
<rect x="1032.2" y="29.2" width="1.6" height="1.6" fill="#8c8372"/><rect x="1032.2" y="30.8" width="1.6" height="1" fill="#fbfbfb"/>
<rect x="1032.2" y="33.6" width="1.6" height="1.6" fill="#8c8372"/><rect x="1032.2" y="35.2" width="1.6" height="1" fill="#fbfbfb"/>
<rect x="1032.2" y="38.0" width="1.6" height="1.6" fill="#8c8372"/><rect x="1032.2" y="39.6" width="1.6" height="1" fill="#fbfbfb"/>
<g><path d="M1039.400 29.200l2-1.600h4.600l1 1.400h6.600v1.600l-5.200 7.600h-9z" fill="#f4cc64" stroke="#b87814" stroke-width=".9" stroke-linejoin="round"/><path d="M1039.600 38.200l4.800-6.400h10.200l-5 6.400z" fill="url(#gFold)" stroke="#b87814" stroke-width=".9" stroke-linejoin="round"/><circle cx="1046.600" cy="28.400" r="3.300" fill="url(#gPur)"/><circle cx="1051.600" cy="30.300" r="3.300" fill="url(#gPlay)"/></g>
<g><path d="M3.500 77.500h6l3 3v8.500h-9z" fill="#fdfdfb" stroke="#b4a47c" stroke-width="1"/><path d="M9.500 77.500v3h3" fill="#ecd8a0" stroke="#b4a47c" stroke-width=".8"/><path d="M5 80.500h3M5 82.500h4M5 84.500h3M5 86.500h3" stroke="#7c9cd8" stroke-width=".9"/><path d="M7.600 84.200c0-.9.500-1.400 1.400-1.400h2.400c.7 0 1.100.300 1.300.9l.2.600h4c.8 0 1.200.400 1.200 1.200v4.700c0 .8-.400 1.200-1.200 1.200h-8.100c-.8 0-1.200-.400-1.200-1.200z" fill="url(#gFold)" stroke="#a8641c" stroke-width="1"/></g>
<path transform="translate(79.0,79.7) scale(1.000)" d="M0.500 0.500h2.300l2.200 2.200 2.200-2.200h2.300v2.300l-2.200 2.200 2.200 2.200v2.300h-2.300l-2.200-2.200-2.200 2.200h-2.300v-2.300l2.200-2.200-2.200-2.200z" fill="#fdfdfd" stroke="#4c4c4c" stroke-width="1" stroke-linejoin="round"/>
<g><rect x="102.500" y="78.500" width="8.500" height="5" fill="#e4ecf8" stroke="#6484bc" stroke-width="1"/><path d="M106.800 84v2.500M105 89v-2.500h8.500v2.500" fill="none" stroke="#5474ac" stroke-width="1"/><rect x="103.400" y="89.400" width="4.200" height="3.400" fill="#f8dc74" stroke="#bc9424" stroke-width=".9"/><rect x="111.400" y="89.400" width="4.200" height="3.400" fill="#f8dc74" stroke="#bc9424" stroke-width=".9"/></g>
<text x="179.600" y="83.700" font-family="Liberation Sans, sans-serif" font-size="7" fill="#2e86c4" stroke="#2e86c4" stroke-width=".25" letter-spacing=".1">1010</text><text x="179.600" y="89.900" font-family="Liberation Sans, sans-serif" font-size="7" fill="#2e86c4" stroke="#2e86c4" stroke-width=".25" letter-spacing=".1">0101</text>
<g transform="translate(257.0,78.0) scale(1.000)"><g fill="none" stroke="#5a2a2a" stroke-width="1.250" stroke-linecap="round"><path d="M4.200 4.200l-.4-3.800M6.600 3l1.600-2.200M3 6.200l-2.800-.600M9.600 4.800l3-.2 1.400 1.400M3.800 8.400l-2.600 1 .2 0M10.800 8l2.600.4 1.200 1.600M5.400 11.400l.2 2 1.400 1.400M9 11.600l1.400 1.600 1.200 1"/></g><circle cx="4.700" cy="4.700" r="1.500" fill="#f4643c" stroke="#7c2c2c" stroke-width=".9"/><ellipse cx="7.800" cy="8" rx="3" ry="4.100" transform="rotate(-40 7.800 8)" fill="#f4643c" stroke="#7c2c2c" stroke-width="1.100"/><path d="M6.200 6.600l3.400 3.400M7.600 5.800l2.800 2.800" stroke="#fcc0a8" stroke-width=".8"/></g>
<rect x="328.500" y="79.500" width="9" height="3" fill="#fdfdfd" stroke="#5a5a5a" stroke-width="1"/>
<rect x="351.500" y="79.500" width="9" height="9" fill="#fdfdfd" stroke="#5a5a5a" stroke-width="1"/><rect x="351" y="79" width="10" height="1.800" fill="#5a5a5a"/>
<g><rect x="181.500" y="102.500" width="10" height="10" fill="#eef4fc" stroke="#a4acc4" stroke-width="1"/><rect x="183.500" y="104.500" width="10" height="10" fill="#f4f9ff" stroke="#8c98b8" stroke-width="1"/><rect x="185.200" y="108.900" width="6.800" height="1.300" fill="#0c3c7c"/></g>
<g fill="#fff6d8" stroke="#b47e10" stroke-width="1.100" stroke-linejoin="round"><path d="M203.300 104.300l4.800-3.900v2.500h6.800v2.800h-6.800v2.500z"/><path d="M218.700 111.400l-4.800-3.900v2.500h-7.200v2.800h7.200v2.500z"/></g>
<path d="M226.500 101.600h12v1.200l-4.100 4.800v6l-3.800 2v-8l-4.100-4.800z" fill="#e4f0fc" stroke="#8090b4" stroke-width="1" stroke-linejoin="round"/>
<g fill="none" stroke="#a4a4a4" stroke-width="1.100"><rect x="259.400" y="103.400" width="10.100" height="10.100" fill="#ebebeb"/><path d="M264.450 102v13M258 108.450h13"/></g>
<g fill="#f0f0f0" stroke="#a0a0a0" stroke-width="1" stroke-linejoin="round"><path d="M280.600 108.600c-.2-3.400 1.600-5 4.400-5v-2.400l4.300 3.800-4.300 3.800v-2.400c-1.400 0-2.200.8-2.500 2.400z"/><path d="M293.600 108.200c.2 3.400-1.600 5-4.400 5v2.400l-4.300-3.800 4.300-3.800v2.400c1.400 0 2.200-.8 2.500-2.400z"/></g>
<rect x="311" y="100" width="16" height="15.800" rx="2.200" fill="#a0a0a0"/>
<path d="M333.800 106h7.200l-3.600 4.100z" fill="#62626a"/>
<g fill="#fff" stroke="#3c3c3c" stroke-width=".8"><circle cx="359.300" cy="103.400" r="1.900"/><circle cx="359.300" cy="108.400" r="1.900"/><circle cx="359.300" cy="113.400" r="1.900"/></g>
<path d="M9.600 127.2l4.200 4.100-4.200 4.100" fill="none" stroke="#a4a4a4" stroke-width="1.900"/>
<path d="M9.600 145.2l4.200 4.100-4.200 4.100" fill="none" stroke="#a4a4a4" stroke-width="1.900"/>
<g transform="translate(20,121)"><path d="M1.900 13.600v-8.200l1.400-2h4.400l1.200 1.800h1.600v8.400z" fill="#fbe2a0" stroke="#d8b068" stroke-width=".8"/><rect x="4" y="4.700" width="4" height="1.300" fill="#fffdf4"/><path d="M1.800 14.200l3.400-5h10.600l-3.200 5z" fill="#a8d0f4" stroke="#2c3cac" stroke-width="1" stroke-linejoin="round"/><text x="10.100" y="7.600" font-family="Liberation Sans, sans-serif" font-size="7.800" font-weight="bold" fill="#1c5c94">C</text><text x="9.800" y="16.500" font-family="Liberation Sans, sans-serif" font-size="9" font-weight="bold" fill="#e8b81c">S</text></g>
<g transform="translate(20,139)"><path d="M1.900 13.600v-8.200l1.400-2h4.400l1.200 1.800h1.600v8.400z" fill="#fbe2a0" stroke="#d8b068" stroke-width=".8"/><rect x="4" y="4.700" width="4" height="1.300" fill="#fffdf4"/><path d="M1.800 14.200l3.400-5h10.600l-3.200 5z" fill="#a8d0f4" stroke="#2c3cac" stroke-width="1" stroke-linejoin="round"/><text x="10.100" y="7.600" font-family="Liberation Sans, sans-serif" font-size="7.800" font-weight="bold" fill="#1c5c94">C</text><text x="9.800" y="16.500" font-family="Liberation Sans, sans-serif" font-size="9" font-weight="bold" fill="#e8b81c">S</text></g>
<g transform="translate(382.3,78.0) scale(1.000)"><g fill="none" stroke="#2a7c6c" stroke-width="1.250" stroke-linecap="round"><path d="M4.200 4.200l-.4-3.800M6.600 3l1.600-2.200M3 6.200l-2.800-.600M9.600 4.800l3-.2 1.400 1.400M3.800 8.400l-2.600 1 .2 0M10.800 8l2.600.4 1.200 1.600M5.400 11.400l.2 2 1.400 1.400M9 11.600l1.400 1.600 1.200 1"/></g><circle cx="4.700" cy="4.700" r="1.500" fill="#a4cc98" stroke="#1c7a9c" stroke-width=".9"/><ellipse cx="7.800" cy="8" rx="3" ry="4.100" transform="rotate(-40 7.800 8)" fill="#a4cc98" stroke="#1c7a9c" stroke-width="1.100"/><path d="M6.200 6.600l3.400 3.400M7.600 5.800l2.800 2.800" stroke="#ddf0d0" stroke-width=".7"/></g>
<path transform="translate(444.0,80.0) scale(1.000)" d="M0.500 0.500h2.300l2.200 2.200 2.200-2.200h2.300v2.300l-2.200 2.200 2.200 2.200v2.300h-2.300l-2.200-2.200-2.200 2.200h-2.300v-2.300l2.200-2.200-2.200-2.200z" fill="#fdfdfd" stroke="#4c4c4c" stroke-width="1" stroke-linejoin="round"/>
<path d="M385.2 106.4l4.300 4.300 4.300-4.300" fill="none" stroke="#404040" stroke-width="1.600"/>
<g><rect x="398" y="99.9" width="16" height="16" rx="2.400" fill="#1c3c98"/><text x="400.300" y="112.0" font-family="Liberation Serif, serif" font-size="13" font-weight="bold" fill="#fff" stroke="#fff" stroke-width=".35" textLength="12" lengthAdjust="spacingAndGlyphs">LS</text></g>
<path d="M401.2 124.4l4.300 4.300 4.300-4.300" fill="none" stroke="#404040" stroke-width="1.600"/>
<g fill="none" stroke="#1c5ca4" stroke-width="1.100"><path d="M417.0 122.4c1.200-2 3.200-2.800 5.400-2.400"/><path d="M427.0 128.6c-1.200 2-3.200 2.800-5.400 2.400"/></g>
<path d="M415.8 120.8l.3 3 2.500-1.700z" fill="#1c5ca4"/><path d="M428.2 130.2l-.3-3-2.500 1.700z" fill="#1c5ca4"/>
<path d="M429.54 123.03L429.54 124.37L428.67 124.36L428.27 125.33L428.89 125.94L427.94 126.89L427.33 126.27L426.36 126.67L426.37 127.54L425.03 127.54L425.04 126.67L424.07 126.27L423.46 126.89L422.51 125.94L423.13 125.33L422.73 124.36L421.86 124.37L421.86 123.03L422.73 123.04L423.13 122.07L422.51 121.46L423.46 120.51L424.07 121.13L425.04 120.73L425.03 119.86L426.37 119.86L426.36 120.73L427.33 121.13L427.94 120.51L428.89 121.46L428.27 122.07L428.67 123.04z" fill="#f6c84c" stroke="#a87c2c" stroke-width="0.90" stroke-linejoin="round"/><circle cx="425.70" cy="123.70" r="1.29" fill="#fff8e0" stroke="#a87c2c" stroke-width="0.81"/>
<path d="M422.44 127.93L422.44 129.27L421.57 129.26L421.17 130.23L421.79 130.84L420.84 131.79L420.23 131.17L419.26 131.57L419.27 132.44L417.93 132.44L417.94 131.57L416.97 131.17L416.36 131.79L415.41 130.84L416.03 130.23L415.63 129.26L414.76 129.27L414.76 127.93L415.63 127.94L416.03 126.97L415.41 126.36L416.36 125.41L416.97 126.03L417.94 125.63L417.93 124.76L419.27 124.76L419.26 125.63L420.23 126.03L420.84 125.41L421.79 126.36L421.17 126.97L421.57 127.94z" fill="#f6c84c" stroke="#a87c2c" stroke-width="0.90" stroke-linejoin="round"/><circle cx="418.60" cy="128.60" r="1.29" fill="#fff8e0" stroke="#a87c2c" stroke-width="0.81"/>
<path d="M445.03 141.63L445.03 143.17L444.03 143.17L443.56 144.28L444.28 144.99L443.19 146.08L442.48 145.36L441.37 145.83L441.37 146.83L439.83 146.83L439.83 145.83L438.72 145.36L438.01 146.08L436.92 144.99L437.64 144.28L437.17 143.17L436.17 143.17L436.17 141.63L437.17 141.63L437.64 140.52L436.92 139.81L438.01 138.72L438.72 139.44L439.83 138.97L439.83 137.97L441.37 137.97L441.37 138.97L442.48 139.44L443.19 138.72L444.28 139.81L443.56 140.52L444.03 141.63z" fill="#f8cc54" stroke="#5c3c1c" stroke-width="1.00" stroke-linejoin="round"/><circle cx="440.60" cy="142.40" r="1.49" fill="#fff8e0" stroke="#5c3c1c" stroke-width="0.90"/>
<path d="M431 144.0l6.800 3.300-6.800 3.500z" fill="#4cac5c" stroke="#3c9448" stroke-width=".5"/>
<g><rect x="420.800" y="154.6" width="6.800" height="13.600" rx=".8" fill="#c4c8d8" stroke="#a4a494" stroke-width=".8"/><rect x="421.600" y="155.4" width="5.200" height="3.400" fill="#eef0f4"/><path d="M422 155.9l2.200 1.200-2.200 1.200z" fill="#3c9c4c"/><rect x="421.600" y="160.4" width="5.200" height="1.200" fill="#e8eaf0"/><path d="M415.200 162.0l6.600 3.400-6.600 3.500z" fill="#4cac5c" stroke="#3c9448" stroke-width=".5"/></g>
<path d="M385.2 178.4l4.300 4.300 4.300-4.300" fill="none" stroke="#404040" stroke-width="1.600"/>
<g><rect x="398" y="171.9" width="16" height="16" rx="2.400" fill="#1c3c98"/><text x="400.300" y="184.0" font-family="Liberation Serif, serif" font-size="13" font-weight="bold" fill="#fff" stroke="#fff" stroke-width=".35" textLength="12" lengthAdjust="spacingAndGlyphs">LS</text></g>
<path d="M401.2 196.4l4.300 4.300 4.300-4.300" fill="none" stroke="#404040" stroke-width="1.600"/>
<g fill="none" stroke="#1c5ca4" stroke-width="1.100"><path d="M417.0 194.4c1.200-2 3.200-2.800 5.400-2.400"/><path d="M427.0 200.6c-1.200 2-3.200 2.800-5.400 2.400"/></g>
<path d="M415.8 192.8l.3 3 2.500-1.700z" fill="#1c5ca4"/><path d="M428.2 202.2l-.3-3-2.500 1.700z" fill="#1c5ca4"/>
<path d="M429.54 194.71L429.54 196.09L428.64 196.08L428.23 197.07L428.87 197.70L427.90 198.67L427.27 198.03L426.28 198.44L426.29 199.34L424.91 199.34L424.92 198.44L423.93 198.03L423.30 198.67L422.33 197.70L422.97 197.07L422.56 196.08L421.66 196.09L421.66 194.71L422.56 194.72L422.97 193.73L422.33 193.10L423.30 192.13L423.93 192.77L424.92 192.36L424.91 191.46L426.29 191.46L426.28 192.36L427.27 192.77L427.90 192.13L428.87 193.10L428.23 193.73L428.64 194.72z" fill="#f6c84c" stroke="#a87c2c" stroke-width="0.90" stroke-linejoin="round"/><circle cx="425.60" cy="195.40" r="1.32" fill="#fff8e0" stroke="#a87c2c" stroke-width="0.81"/>
<g stroke="#b08c14" stroke-width=".9" fill="url(#gYh)"><rect x="415.5" y="198.3" width="3.4" height="6.9"/><rect x="419.9" y="198.3" width="3.4" height="6.9"/></g>
<path d="M417.2 214.4l4.300 4.300 4.300-4.300" fill="none" stroke="#404040" stroke-width="1.600"/>
<path d="M444.93 213.73L444.93 215.27L443.93 215.27L443.46 216.38L444.18 217.09L443.09 218.18L442.38 217.46L441.27 217.93L441.27 218.93L439.73 218.93L439.73 217.93L438.62 217.46L437.91 218.18L436.82 217.09L437.54 216.38L437.07 215.27L436.07 215.27L436.07 213.73L437.07 213.73L437.54 212.62L436.82 211.91L437.91 210.82L438.62 211.54L439.73 211.07L439.73 210.07L441.27 210.07L441.27 211.07L442.38 211.54L443.09 210.82L444.18 211.91L443.46 212.62L443.93 213.73z" fill="#f8cc54" stroke="#5c3c1c" stroke-width="1.00" stroke-linejoin="round"/><circle cx="440.50" cy="214.50" r="1.49" fill="#fff8e0" stroke="#5c3c1c" stroke-width="0.90"/>
<g stroke="#b08c14" stroke-width=".9" fill="url(#gYh)"><rect x="431.5" y="216.3" width="3.3" height="6.6"/><rect x="435.8" y="216.3" width="3.3" height="6.6"/></g>
<rect x="448" y="227.9" width="12" height="2.400" fill="#2c6cb0"/>
<rect x="448" y="232.0" width="12" height="2.400" fill="#2c6cb0"/>
<rect x="448" y="236.1" width="12" height="2.400" fill="#2c6cb0"/>
<g><rect x="420.800" y="244.6" width="6.800" height="13.600" rx=".8" fill="#c4c8d8" stroke="#a4a494" stroke-width=".8"/><rect x="421.600" y="245.4" width="5.200" height="3.400" fill="#eef0f4"/><path d="M422 245.9l2.200 1.200-2.200 1.200z" fill="#3c9c4c"/><rect x="421.600" y="250.4" width="5.200" height="1.200" fill="#e8eaf0"/><path d="M415.200 252.0l6.600 3.400-6.600 3.500z" fill="#4cac5c" stroke="#3c9448" stroke-width=".5"/></g>
<g><path d="M384.5 308.500h7l3 3v10h-10z" fill="#fdfdf8" stroke="#a48c5c" stroke-width="1"/><path d="M391.5 308.500v3h3" fill="#f0dca8" stroke="#a48c5c" stroke-width=".8"/><text x="384.8" y="319.600" font-family="Liberation Sans, sans-serif" font-size="11.400" font-weight="bold" fill="#1c4888" letter-spacing="-.5">.c</text></g>
<g><path d="M537.5 308.500h7l3 3v10h-10z" fill="#fdfdf8" stroke="#a48c5c" stroke-width="1"/><path d="M544.5 308.500v3h3" fill="#f0dca8" stroke="#a48c5c" stroke-width=".8"/><text x="537.8" y="319.600" font-family="Liberation Sans, sans-serif" font-size="11.400" font-weight="bold" fill="#1c4888" letter-spacing="-.5">.c</text></g>
<path transform="translate(665.0,310.2) scale(1.000)" d="M0.500 0.500h2.300l2.200 2.200 2.200-2.200h2.300v2.300l-2.200 2.200 2.200 2.200v2.300h-2.300l-2.200-2.200-2.200 2.200h-2.300v-2.300l2.200-2.200-2.200-2.200z" fill="#fdfdfd" stroke="#4c4c4c" stroke-width="1" stroke-linejoin="round"/>
<g><circle cx="409.400" cy="340.300" r="3.900" fill="#e8ecf4" stroke="#a4acbc" stroke-width=".9"/><rect x="407.200" y="339.700" width="4.400" height="1.200" fill="#4c5c80"/></g>
<path d="M379 427.800h3.600v-2.600l4.600 5.300-4.600 5.300v-2.600h-3.600z" fill="url(#gIP)" stroke="#fff" stroke-width="1.800" paint-order="stroke" stroke-linejoin="miter"/>
<path d="M543.0 420.8L545.0 422.8L547.0 420.8L549.0 422.8L551.0 420.8L553.0 422.8L555.0 420.8L557.0 422.8L559.0 420.8L561.0 422.8L563.0 420.8L565.0 422.8L567.0 420.8L569.0 422.8L571.0 420.8" fill="none" stroke="#f0603c" stroke-width=".9"/></svg>
<span class="t" style="left:4.9px;top:2.8px;letter-spacing:-0.248px"><u>F</u>ile</span>
<span class="t" style="left:36.8px;top:2.8px;letter-spacing:-0.162px"><u>E</u>dit</span>
<span class="t" style="left:70.7px;top:2.8px;letter-spacing:-0.226px"><u>S</u>ource</span>
<span class="t" style="left:121.0px;top:2.8px;letter-spacing:-0.151px">Refac<u>t</u>or</span>
<span class="t" style="left:178.8px;top:2.8px;letter-spacing:0.046px"><u>N</u>avigate</span>
<span class="t" style="left:239.8px;top:2.8px;letter-spacing:-0.606px">Se<u>a</u>rch</span>
<span class="t" style="left:288.7px;top:2.8px;letter-spacing:0.023px"><u>P</u>roject</span>
<span class="t" style="left:340.0px;top:2.8px;letter-spacing:0.080px">ConfigTools</span>
<span class="t" style="left:416.8px;top:2.8px;letter-spacing:-0.458px"><u>R</u>un</span>
<span class="t" style="left:451.9px;top:2.8px;letter-spacing:-0.184px">Analysis</span>
<span class="t" style="left:509.3px;top:2.8px;letter-spacing:-1.325px">FreeRTOS</span>
<span class="t" style="left:570.5px;top:2.8px;letter-spacing:0.483px"><u>W</u>indow</span>
<span class="t" style="left:628.5px;top:2.8px;letter-spacing:0.371px"><u>H</u>elp</span>
<span class="t" style="left:22.3px;top:76.6px;letter-spacing:-0.118px">Project...</span>
<span class="t" style="left:120.5px;top:76.6px;letter-spacing:-0.200px">Periph...</span>
<span class="t" style="left:199.1px;top:76.6px;letter-spacing:-0.486px">Registers</span>
<span class="t" style="left:275.7px;top:76.6px;letter-spacing:-0.297px">Faults</span>
<span class="t" style="left:41.0px;top:121.6px;letter-spacing:-0.064px">evkmimxrt1160_hello_world_cm4</span>
<span class="t" style="left:219.6px;top:121.6px;letter-spacing:-0.474px;color:#a08a5e">&lt;Slave&gt;</span>
<span class="t" style="left:41.0px;top:139.6px;letter-spacing:-0.064px">evkmimxrt1160_hello_world_cm7</span>
<span class="t" style="left:219.6px;top:139.6px;letter-spacing:-0.115px;color:#a08a5e">&lt;Master&gt;</span>
<span class="t" style="left:400.9px;top:76.8px;letter-spacing:-0.094px">Debug</span>
<span class="t" style="left:419.0px;top:100.0px;letter-spacing:-0.067px">evkmimxrt1160_hello_world_cm7 </span>
<span class="t" style="left:598.1px;top:100.0px;letter-spacing:-0.518px">LinkServer </span>
<span class="t" style="left:654.8px;top:100.0px;letter-spacing:-0.394px">Debug </span>
<span class="t" style="left:691.8px;top:100.0px;letter-spacing:0.377px">[C/C++ </span>
<span class="t" style="left:736.2px;top:100.0px;letter-spacing:0.043px">(NXP </span>
<span class="t" style="left:769.2px;top:100.0px;letter-spacing:-0.268px">Semiconductors) </span>
<span class="t" style="left:860.2px;top:100.0px;letter-spacing:-0.964px">MCU </span>
<span class="t" style="left:889.4px;top:100.0px;letter-spacing:0.250px">Application]</span>
<span class="t" style="left:435.3px;top:118.0px;letter-spacing:-0.123px">evkmimxrt1160_hello_world_cm7.axf </span>
<span class="t" style="left:632.7px;top:118.0px;letter-spacing:-0.383px">[MIMXRT1166xxxxx </span>
<span class="t" style="left:737.1px;top:118.0px;letter-spacing:0.184px">(cortex-m7)]</span>
<span class="t" style="left:451.9px;top:136.0px;letter-spacing:-0.686px">Thread </span>
<span class="t" style="left:490.0px;top:136.0px;letter-spacing:-0.259px">#1 </span>
<span class="t" style="left:507.0px;top:136.0px;letter-spacing:-2.188px">1 </span>
<span class="t" style="left:515.4px;top:136.0px;letter-spacing:-0.025px">(Running)</span>
<span class="t" style="left:435.1px;top:154.0px;letter-spacing:0.252px">arm-none-eabi-gdb </span>
<span class="t" style="left:545.2px;top:154.0px;letter-spacing:-0.588px">(8.3.1.20191211)</span>
<span class="t" style="left:419.0px;top:172.0px;letter-spacing:-0.067px">evkmimxrt1160_hello_world_cm4 </span>
<span class="t" style="left:598.1px;top:172.0px;letter-spacing:-0.518px">LinkServer </span>
<span class="t" style="left:654.8px;top:172.0px;letter-spacing:-0.394px">Debug </span>
<span class="t" style="left:691.8px;top:172.0px;letter-spacing:0.377px">[C/C++ </span>
<span class="t" style="left:736.2px;top:172.0px;letter-spacing:0.043px">(NXP </span>
<span class="t" style="left:769.2px;top:172.0px;letter-spacing:-0.268px">Semiconductors) </span>
<span class="t" style="left:860.2px;top:172.0px;letter-spacing:-0.964px">MCU </span>
<span class="t" style="left:889.4px;top:172.0px;letter-spacing:0.250px">Application]</span>
<span class="t" style="left:435.3px;top:190.0px;letter-spacing:-0.123px">evkmimxrt1160_hello_world_cm4.axf </span>
<span class="t" style="left:632.7px;top:190.0px;letter-spacing:-0.383px">[MIMXRT1166xxxxx </span>
<span class="t" style="left:737.1px;top:190.0px;letter-spacing:0.184px">(cortex-m4)]</span>
<span class="t" style="left:451.9px;top:208.0px;letter-spacing:-0.686px">Thread </span>
<span class="t" style="left:490.0px;top:208.0px;letter-spacing:-0.259px">#1 </span>
<span class="t" style="left:507.0px;top:208.0px;letter-spacing:-2.188px">1 </span>
<span class="t" style="left:515.4px;top:208.0px;letter-spacing:-0.513px">(Suspended </span>
<span class="t" style="left:580.0px;top:208.0px;letter-spacing:-0.744px">: </span>
<span class="t" style="left:585.9px;top:208.0px;letter-spacing:-0.057px">Breakpoint)</span>
<span class="t" style="left:467.1px;top:226.0px;letter-spacing:0.137px">main() </span>
<span class="t" style="left:505.3px;top:226.0px;letter-spacing:0.484px">at </span>
<span class="t" style="left:518.5px;top:226.0px;letter-spacing:-0.253px">hello_world_core1.c:60 </span>
<span class="t" style="left:640.0px;top:226.0px;letter-spacing:-0.225px">0x1ffe09f6</span>
<span class="t" style="left:435.1px;top:244.0px;letter-spacing:0.252px">arm-none-eabi-gdb </span>
<span class="t" style="left:545.2px;top:244.0px;letter-spacing:-0.588px">(8.3.1.20191211)</span>
<span class="t" style="left:400.0px;top:306.8px;letter-spacing:-0.146px">hello_world_core0.c</span>
<span class="t" style="left:553.7px;top:306.8px;letter-spacing:-0.174px">hello_world_core1.c</span>
<div class="a" style="left:379px;top:329px;width:681px;height:157px;overflow:hidden"><div class="a" style="left:-379px;top:-329px"><span class="ln" style="top:319.6px">53</span>
<span class="c" style="top:319.6px"> <span class="cm">*/</span></span>
<span class="ln" style="top:334.6px">54</span>
<span class="c" style="top:334.6px"><span class="k">int</span> <span class="b">main</span>(<span class="k">void</span>)</span>
<span class="ln" style="top:349.6px">55</span>
<span class="c" style="top:349.6px">{</span>
<span class="ln" style="top:364.6px">56</span>
<span class="c" style="top:364.6px">    <span class="ty">uint32_t</span> startupData, i;</span>
<span class="ln" style="top:379.6px">57</span>
<span class="c" style="top:379.6px">    <span class="ty">mcmgr_status_t</span> status;</span>
<span class="ln" style="top:394.6px">58</span>
<span class="ln" style="top:409.6px">59</span>
<span class="c" style="top:409.6px">    <span class="cm">/* Define the init structure for the output LED pin*/</span></span>
<span class="ln" style="top:424.6px">60</span>
<span class="c" style="top:424.6px">    <span class="ty">gpio_pin_config_t</span> led_config = {</span>
<span class="ln" style="top:439.6px">61</span>
<span class="c" style="top:439.6px">        <span class="en">kGPIO_DigitalOutput</span>,</span>
<span class="ln" style="top:454.6px">62</span>
<span class="c" style="top:454.6px">        0,</span>
<span class="ln" style="top:469.6px">63</span>
<span class="c" style="top:469.6px">    };</span></div></div>

<!-- red annotation boxes -->
<div class="a rb" style="left:302px;top:18px;width:30px;height:22px"></div>
<div class="a rb" style="left:383px;top:168px;width:578px;height:72px"></div>
<div class="a rb" style="left:527px;top:298px;width:151px;height:26px"></div>

</body></html>
